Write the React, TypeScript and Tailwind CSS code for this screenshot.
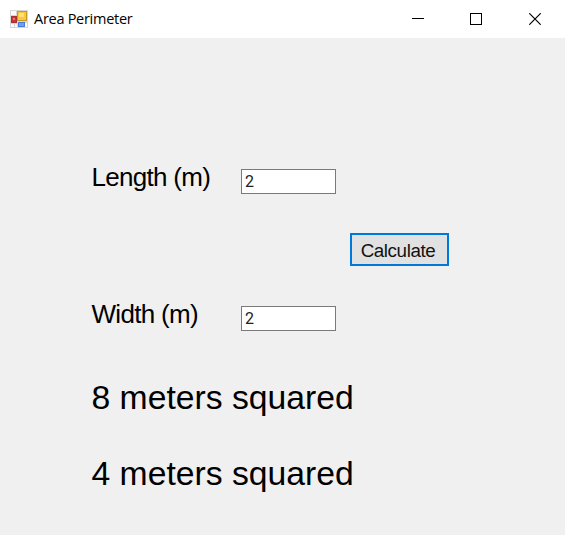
import { useState } from "react";

function AppIcon() {
  return (
    <svg width="18" height="18" viewBox="0 0 18 18" className="block" shapeRendering="crispEdges">
      <rect width="18" height="18" fill="#d6d6d6" />
      <path d="M1 1h5v4H1zM1 14h3v3H1zM5 14h2v3H5zM15 13h2v4h-2z" fill="#fafafa" />
      <rect x="1" y="6" width="6" height="7" fill="#a83232" />
      <rect x="2" y="7" width="4" height="5" fill="#c93230" />
      <rect x="3" y="8" width="2" height="2" fill="#e87a74" />
      <rect x="7" y="1" width="10" height="10" fill="#c8982a" />
      <rect x="8" y="2" width="8" height="8" fill="#f8c93c" />
      <rect x="9" y="3" width="5" height="4" fill="#ffe07a" />
      <rect x="8" y="12" width="7" height="5" fill="#4a7bd6" />
      <rect x="9" y="13" width="5" height="3" fill="#6fa0f0" />
    </svg>
  );
}

function TitleBar() {
  return (
    <header className="flex h-[38px] items-center bg-white pl-[10px]">
      <AppIcon />
      <h1 className="ml-[6px] grow font-['Open_Sans','Noto_Sans',sans-serif] text-[14.5px] leading-[18px] tracking-[-0.28px] text-black">
        Area Perimeter
      </h1>
      <button aria-label="Minimize" className="flex h-full w-[58px] items-center justify-center">
        <svg width="12" height="12" className="-ml-[2px]" shapeRendering="crispEdges">
          <path d="M0 5.5h12" stroke="#000" />
        </svg>
      </button>
      <button aria-label="Maximize" className="flex h-full w-[58px] items-center justify-center">
        <svg width="12" height="12" fill="none" className="-ml-[2px]" shapeRendering="crispEdges">
          <rect x="0.5" y="0.5" width="11" height="11" stroke="#000" />
        </svg>
      </button>
      <button aria-label="Close" className="mr-[1px] flex h-full w-[58px] items-center justify-center">
        <svg width="12" height="12">
          <path d="M0.3 0.3l11.4 11.4M11.7 0.3L0.3 11.7" stroke="#000" strokeWidth="1.2" />
        </svg>
      </button>
    </header>
  );
}

function Field({ label, value, onChange }: { label: string; value: string; onChange: (v: string) => void }) {
  return (
    <label className="flex h-[26px] items-center">
      <span className="w-[150px] whitespace-nowrap pl-[0.5px] text-[26px] leading-[26px] tracking-[-0.7px]">{label}</span>
      <input
        value={value}
        onChange={(e) => onChange(e.target.value)}
        className="mt-[9px] h-[25px] w-[95px] border border-[#7a7a7a] bg-white pl-[3px] font-['Roboto','Liberation_Sans',sans-serif] text-[16px] leading-[20px] text-[#222] outline-none"
      />
    </label>
  );
}

export default function App() {
  const [length, setLength] = useState("2");
  const [width, setWidth] = useState("2");
  const [result, setResult] = useState({ perimeter: 8, area: 4 });

  const calculate = () => {
    const l = Number(length);
    const w = Number(width);
    setResult({ perimeter: 2 * (l + w), area: l * w });
  };

  return (
    <div className="flex h-[535px] w-[565px] flex-col overflow-hidden bg-[#f0f0f0] font-['Liberation_Sans',Arial,sans-serif] text-black">
      <TitleBar />
      <main className="flex flex-col items-start pl-[91px] pt-[126px]">
        <Field label="Length (m)" value={length} onChange={setLength} />
        <button
          onClick={calculate}
          className="ml-[259px] mt-[43px] h-[33px] w-[99px] border-2 border-[#0078d7] bg-[#e1e1e1] pr-[3px] pt-[2px] text-[18.8px] leading-[26px] tracking-[-0.4px] text-[#111]"
        >
          Calculate
        </button>
        <div className="mt-[35px]">
          <Field label="Width (m)" value={width} onChange={setWidth} />
        </div>
        <p className="mt-[51px] pl-[0.5px] text-[33.7px] leading-[38px]">{result.perimeter} meters squared</p>
        <p className="mt-[38px] pl-[0.5px] text-[33.7px] leading-[38px]">{result.area} meters squared</p>
      </main>
    </div>
  );
}
